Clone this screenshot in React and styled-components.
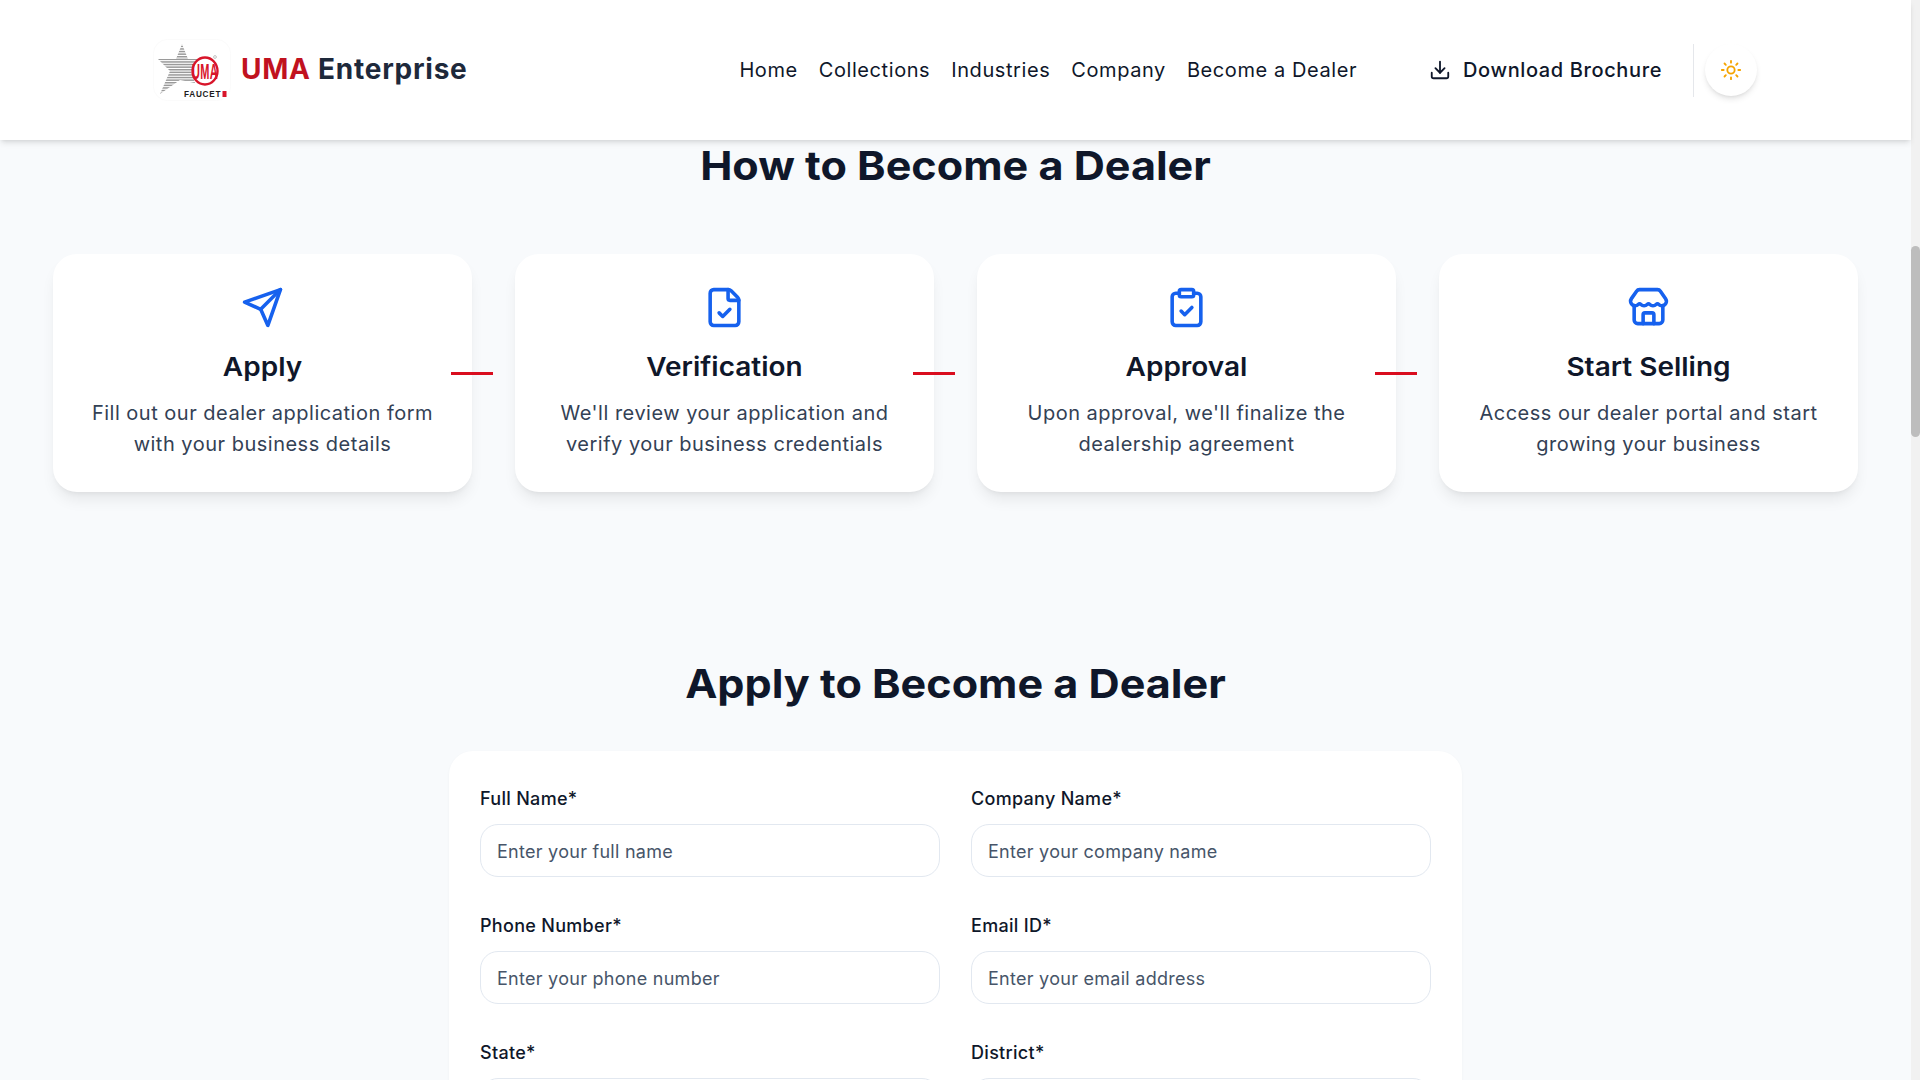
import React from 'react';
import styled, { createGlobalStyle } from 'styled-components';
import { Download, Sun, FileCheck, ClipboardCheck, Store } from 'lucide-react';

const GlobalStyle = createGlobalStyle`
  html, body {
    margin: 0;
    height: 1080px;
    overflow: hidden;
    background: #f8fafc;
  }
  * { box-sizing: border-box; }
  body {
    font-family: Inter, "Liberation Sans", sans-serif;
    color: #0f172a;
  }
`;

const Page = styled.div`
  position: relative;
  width: 1920px;
  height: 1080px;
  overflow: hidden;
`;

const Main = styled.div`
  width: 1911px;
`;

const Scrollbar = styled.div`
  position: absolute;
  top: 0;
  right: 0;
  width: 9px;
  height: 1080px;
  background: #f1f1f1;
`;

const Thumb = styled.div`
  margin-top: 246px;
  height: 191px;
  border-radius: 5px;
  background: #bdbdbd;
`;

const Header = styled.header`
  position: relative;
  z-index: 2;
  height: 140px;
  background: #fff;
  box-shadow: 0 4px 6px -1px rgba(0, 0, 0, 0.1), 0 2px 4px -2px rgba(0, 0, 0, 0.1);
  display: flex;
  align-items: center;
  padding: 0 154px 0 153px;
`;

const Brand = styled.div`
  display: flex;
  align-items: center;
  gap: 10px;
  font-size: 28px;
  font-weight: 700;
  color: #1e293b;
  letter-spacing: 0.75px;
  span { color: #c1121f; }
  div { margin-bottom: 2px; }
`;

const LogoBox = styled.svg`
  display: block;
  width: 78px;
  height: 62px;
`;

const Nav = styled.nav`
  margin-left: auto;
  display: flex;
  align-items: center;
  gap: 21px;
  font-size: 20px;
  letter-spacing: 0.58px;
  color: #0f172a;
`;

const Tools = styled.div`
  display: flex;
  align-items: center;
  margin-left: 72px;
`;

const Brochure = styled.div`
  display: flex;
  align-items: center;
  gap: 12px;
  font-size: 20px;
  font-weight: 450;
  letter-spacing: 0.62px;
  color: #0f172a;
`;

const Divider = styled.div`
  width: 1px;
  height: 53px;
  background: #e5e7eb;
  margin: 0 11px 0 31px;
`;

const ThemeButton = styled.div`
  width: 52px;
  height: 52px;
  border-radius: 50%;
  background: #fff;
  box-shadow: 0 4px 6px -1px rgba(0, 0, 0, 0.1), 0 2px 4px -2px rgba(0, 0, 0, 0.1);
  display: flex;
  align-items: center;
  justify-content: center;
  color: #f5a400;
`;

const Heading = styled.h2`
  margin: 0;
  padding-top: ${(p) => p.$top || 0}px;
  text-align: center;
  font-family: Inter, sans-serif;
  font-size: 40px;
  font-weight: 700;
  line-height: 50px;
  color: #0f172a;
  transform: scaleX(1.078);
`;

const Steps = styled.div`
  display: grid;
  grid-template-columns: repeat(4, 419px);
  gap: 43px;
  justify-content: center;
  margin-top: 63px;
`;

const StepCard = styled.div`
  position: relative;
  height: 238px;
  background: #fff;
  border-radius: 24px;
  box-shadow: 0 10px 15px -3px rgba(0, 0, 0, 0.08), 0 4px 6px -4px rgba(0, 0, 0, 0.08);
  padding: 32px 16px 0;
  text-align: center;
  svg { color: #1661ee; display: block; margin: 0 auto; }
  ${(p) => !p.$last && `
    &::after {
      content: "";
      position: absolute;
      right: -21px;
      top: 118px;
      width: 42px;
      height: 3px;
      background: #d90d1e;
    }
  `}
`;

const StepTitle = styled.h3`
  margin: 21px 0 0;
  font-size: 26px;
  font-weight: 600;
  line-height: 34px;
  color: #0f172a;
  transform: scaleX(1.076);
`;

const StepText = styled.p`
  margin: 14px 0 0;
  font-size: 20px;
  letter-spacing: 0.5px;
  line-height: 31px;
  color: #334155;
`;

const ApplySection = styled.section`
  margin-top: 167px;
`;

const FormCard = styled.div`
  width: 1013px;
  margin: 42px auto 0;
  background: #fff;
  border-radius: 24px;
  padding: 36px 31px 32px;
  box-shadow: 0 1px 3px rgba(0, 0, 0, 0.04);
  display: grid;
  grid-template-columns: 460px 460px;
  justify-content: space-between;
  row-gap: 37px;
`;

const Field = styled.div`
  display: flex;
  flex-direction: column;
  gap: 13px;
`;

const Label = styled.label`
  font-size: 18px;
  font-weight: 500;
  letter-spacing: 0.3px;
  line-height: 24px;
  color: #0f172a;
`;

const Input = styled.input`
  width: 100%;
  height: 53px;
  border: 1px solid #e2e8f0;
  border-radius: 18px;
  padding: 1px 16px 0;
  font-family: inherit;
  font-size: 18px;
  letter-spacing: 0.27px;
  background: #fff;
  &::placeholder { color: #475569; opacity: 1; }
`;

function SendIcon() {
  return (
    <svg width="43" height="43" viewBox="0 0 24 24" fill="none" stroke="currentColor" strokeWidth="2" strokeLinecap="round" strokeLinejoin="round">
      <path d="m22 2-7 20-4-9-9-4Z" />
      <path d="M22 2 11 13" />
    </svg>
  );
}

function Logo() {
  const stripes = [];
  for (let y = 4; y < 58; y += 2.6) stripes.push(<rect key={y} x="0" y={y} width="60" height="1.5" fill="#9a9a9a" />);
  return (
    <LogoBox viewBox="0 0 78 62">
      <rect x="0.5" y="0.5" width="77" height="61" rx="14" fill="#fff" stroke="#fbfbfb" />
      <defs>
        <clipPath id="star"><path d="M29 5 35 20 52 20 38 32 42 44 27 41 7 55 17 32 5 20 23 20Z" /></clipPath>
      </defs>
      <g clipPath="url(#star)">{stripes}</g>
      <ellipse cx="52" cy="32" rx="12.5" ry="13.5" fill="#fff" stroke="#d8152a" strokeWidth="2.4" />
      <text transform="translate(52 40) scale(0.5 1)" textAnchor="middle" fontSize="22" fontWeight="700" fill="#d8152a" fontFamily="'Liberation Sans', sans-serif">UMA</text>
      <circle cx="62" cy="18" r="1.4" fill="none" stroke="#888" strokeWidth="0.5" />
      <text x="31" y="58" fontSize="8.2" fontWeight="700" fill="#1e1e1e" fontFamily="'Liberation Sans', sans-serif">FAUCET</text>
      <rect x="69.5" y="52" width="4" height="6" fill="#d8152a" />
    </LogoBox>
  );
}

const steps = [
  { icon: SendIcon, title: 'Apply', text: ['Fill out our dealer application form', 'with your business details'] },
  { icon: FileCheck, title: 'Verification', text: ["We'll review your application and", 'verify your business credentials'] },
  { icon: ClipboardCheck, title: 'Approval', text: ["Upon approval, we'll finalize the", 'dealership agreement'] },
  { icon: Store, title: 'Start Selling', text: ['Access our dealer portal and start', 'growing your business'] },
];

const fields = [
  ['Full Name*', 'Enter your full name'],
  ['Company Name*', 'Enter your company name'],
  ['Phone Number*', 'Enter your phone number'],
  ['Email ID*', 'Enter your email address'],
  ['State*', ''],
  ['District*', ''],
];

export default function App() {
  return (
    <Page>
      <GlobalStyle />
      <Main>
        <Header>
          <Brand>
            <Logo />
            <div><span>UMA</span> Enterprise</div>
          </Brand>
          <Nav>
            <a>Home</a>
            <a>Collections</a>
            <a>Industries</a>
            <a>Company</a>
            <a>Become a Dealer</a>
          </Nav>
          <Tools>
            <Brochure><Download size={22} />Download Brochure</Brochure>
            <Divider />
            <ThemeButton><Sun size={22} /></ThemeButton>
          </Tools>
        </Header>
        <section>
          <Heading $top={1}>How to Become a Dealer</Heading>
          <Steps>
            {steps.map((s, i) => (
              <StepCard key={s.title} $last={i === steps.length - 1}>
                <s.icon size={43} strokeWidth={2} />
                <StepTitle>{s.title}</StepTitle>
                <StepText>{s.text[0]}<br />{s.text[1]}</StepText>
              </StepCard>
            ))}
          </Steps>
        </section>
        <ApplySection>
          <Heading>Apply to Become a Dealer</Heading>
          <FormCard>
            {fields.map(([label, placeholder]) => (
              <Field key={label}>
                <Label>{label}</Label>
                <Input placeholder={placeholder} readOnly />
              </Field>
            ))}
          </FormCard>
        </ApplySection>
      </Main>
      <Scrollbar><Thumb /></Scrollbar>
    </Page>
  );
}
